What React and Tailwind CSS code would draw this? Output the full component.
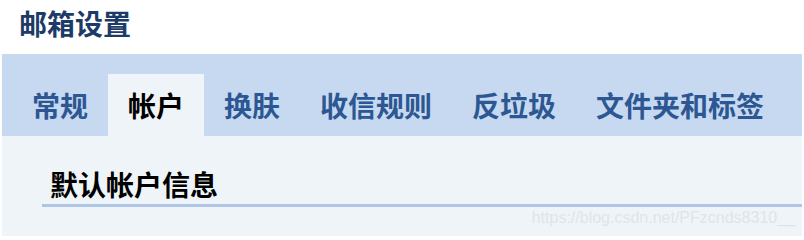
const tabs = ['常规', '帐户', '换肤', '收信规则', '反垃圾', '文件夹和标签']

export default function App() {
  return (
    <div className="w-[804px] h-[236px] bg-white overflow-hidden font-['Noto_Sans_CJK_SC',sans-serif]">
      {/* 标题 */}
      <div className="h-[54px] pt-[9px] pl-[19px]">
        <h1 className="text-[28px] leading-[28px] font-bold text-[#1d3b68]">邮箱设置</h1>
      </div>

      <div className="ml-[2px] w-[800px]">
        {/* 选项卡 */}
        <div className="h-[82px] pt-[20px] pl-[10px] flex bg-[#c6d9f0]">
          {tabs.map((t, i) => (
            <div
              key={t}
              className={
                i === 1
                  ? 'h-[62px] px-[20px] flex items-center bg-[#eff4f9] text-black text-[28px] leading-[28px] font-bold'
                  : 'h-[62px] px-[20px] flex items-center text-[#2c5793] text-[28px] leading-[28px] font-bold'
              }
            >
              {t}
            </div>
          ))}
        </div>

        {/* 内容 */}
        <div className="h-[100px] bg-[#eff4f9] pl-[40px] pt-[34px]">
          <div className="border-b-[3px] border-[#adc6e7] pl-[8px] pb-[6px]">
            <h2 className="text-[28px] leading-[28px] font-bold text-black">默认帐户信息</h2>
          </div>
          <div className="flex justify-end pr-[7px] pt-[2px]">
            <span className="font-['Liberation_Sans',sans-serif] text-[16px] leading-[18px] text-[#dfe4ea]">
              https://blog.csdn.net/PFzcnds8310__
            </span>
          </div>
        </div>
      </div>
    </div>
  )
}
